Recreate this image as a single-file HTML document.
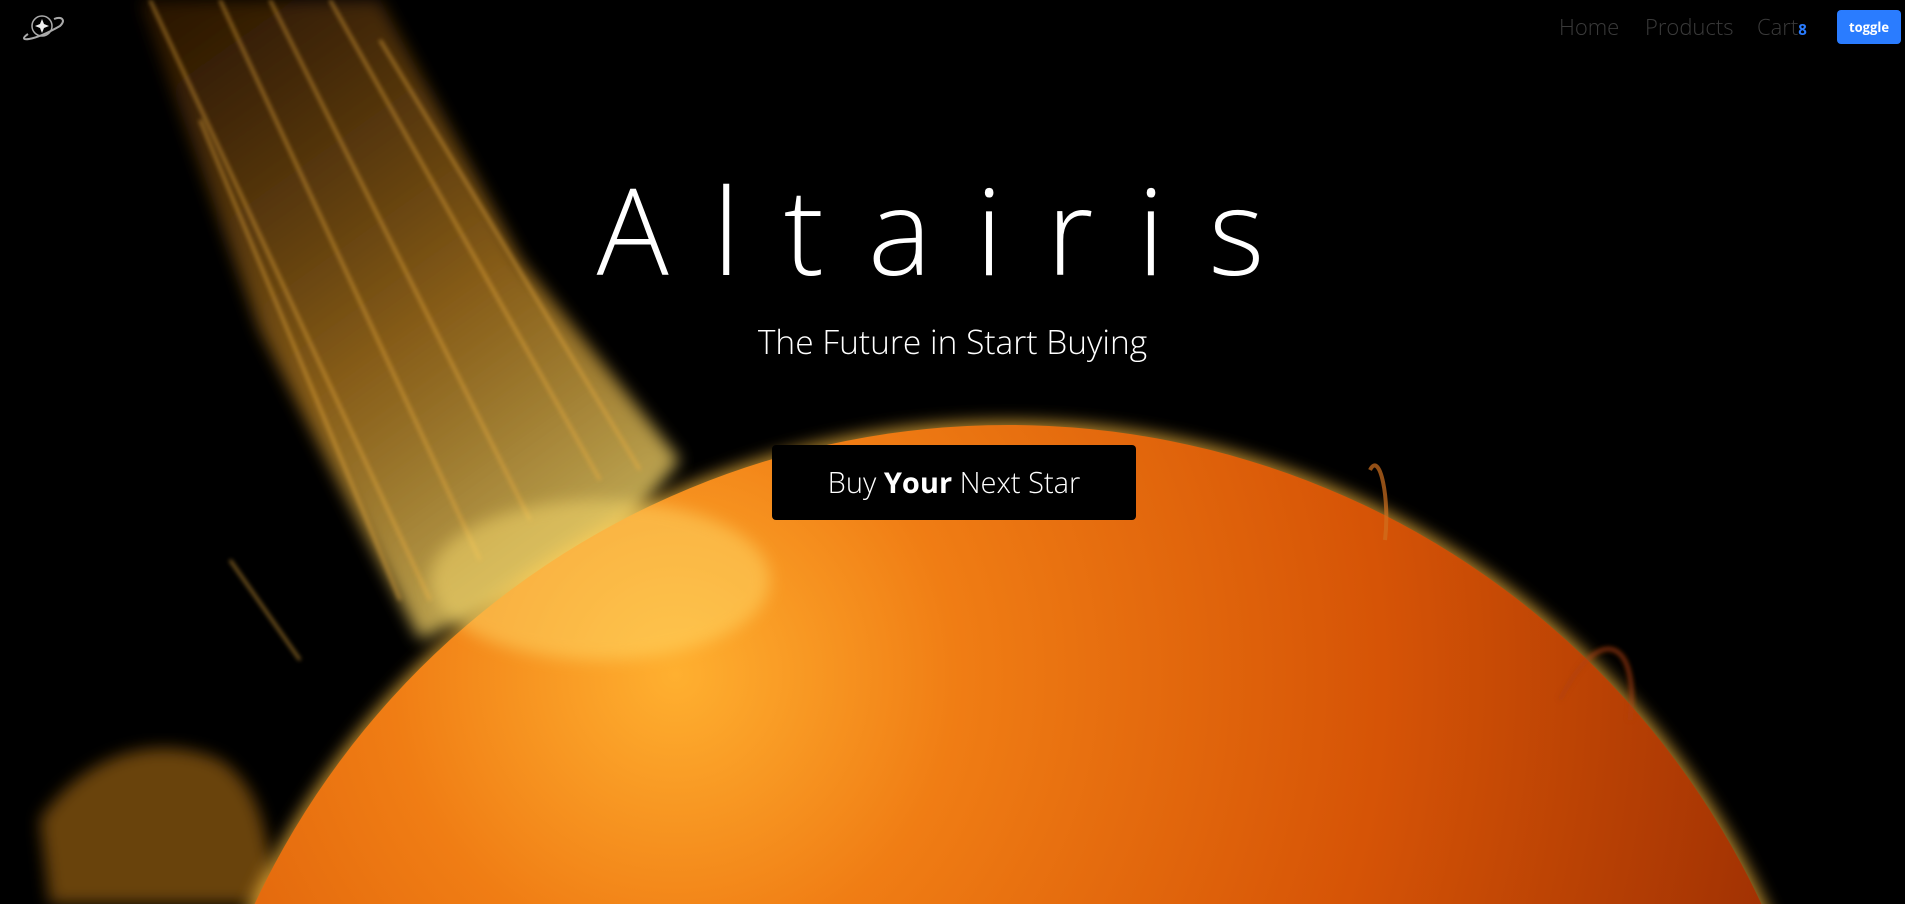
<!DOCTYPE html>
<html><head><meta charset="utf-8"><style>
html,body{margin:0;padding:0;background:#000;width:1905px;height:904px;overflow:hidden;font-family:"Open Sans","Liberation Sans",sans-serif;position:relative}
.bg{position:absolute;left:0;top:0}
nav a{position:absolute;top:12px;color:#3a3a3a;font-size:22px;font-weight:300;text-decoration:none;white-space:nowrap}
.tg{position:absolute;left:1837px;top:10px;width:64px;height:34px;background:#2a7cff;border-radius:4px;color:#fff;font-weight:bold;font-size:13px;line-height:34px;text-align:center}
h1{position:absolute;left:0;width:1905px;top:160px;margin:0;text-align:center;color:#fff;font-weight:300;font-size:120px;letter-spacing:44px;line-height:140px;white-space:nowrap;overflow:hidden}
.sub{position:absolute;left:0;width:1905px;top:318px;text-align:center;color:#fff;font-weight:300;font-size:33.5px}
.btn{position:absolute;left:772px;top:445px;width:364px;height:75px;background:#000;border-radius:4px;color:#fff;font-size:29px;line-height:75px;text-align:center;font-weight:300}
</style></head><body>
<svg class="bg" width="1905" height="904" viewBox="0 0 1905 904">
<defs>
<radialGradient id="sun" cx="0.3" cy="0.15" r="0.85">
<stop offset="0" stop-color="#ffb030"/><stop offset="0.2" stop-color="#f07d14"/><stop offset="0.5" stop-color="#d65406"/><stop offset="1" stop-color="#7a1800"/></radialGradient>
<linearGradient id="fl" x1="0" y1="0" x2="0.6" y2="1">
<stop offset="0" stop-color="#6a3504" stop-opacity="0.5"/><stop offset="0.6" stop-color="#e09a28" stop-opacity="0.8"/><stop offset="1" stop-color="#ffe070"/></linearGradient>
<filter id="b"><feGaussianBlur stdDeviation="8"/></filter>
<filter id="b2"><feGaussianBlur stdDeviation="2"/></filter>
</defs>
<polygon points="140,0 380,0 520,260 680,460 600,560 420,640 260,330" fill="url(#fl)" filter="url(#b)" opacity="0.75"/>
<g stroke="#f0b040" stroke-width="3" opacity="0.55" filter="url(#b2)" fill="none">
<path d="M150,0 L430,600"/><path d="M220,0 L480,560"/><path d="M270,0 L530,520"/><path d="M330,0 L600,480"/><path d="M380,40 L640,470"/><path d="M200,120 L400,600"/><path d="M230,560 L300,660"/>
</g>
<path d="M40,820 C80,760 150,730 220,760 C280,800 260,880 290,904 L50,904 Z" fill="#c07a18" opacity="0.55" filter="url(#b)"/>
<circle cx="1008" cy="1257" r="836" fill="#ffc040" filter="url(#b)" opacity="0.7"/>
<circle cx="1008" cy="1257" r="832" fill="url(#sun)"/>
<ellipse cx="600" cy="580" rx="170" ry="80" fill="#ffe070" opacity="0.45" filter="url(#b)"/>
<path d="M1370,470 C1380,450 1390,500 1385,540" stroke="#d07020" stroke-width="4" fill="none" opacity="0.7"/>
<path d="M1560,700 C1600,620 1640,640 1630,720" stroke="#b04010" stroke-width="5" fill="none" opacity="0.6" filter="url(#b2)"/>
<g transform="translate(22,12)" fill="none" stroke="#aaa">
<circle cx="20" cy="14" r="10" stroke-width="1.5"/>
<path d="M6,22 C-6,30 10,30 38,14 C44,8 40,4 32,7" stroke-width="2"/>
<path d="M20,7 L22,12 L27,14 L22,16 L20,21 L18,16 L13,14 L18,12 Z" fill="#eee" stroke="none"/>
</g>
</svg>
<nav>
<a style="left:1559px">Home</a>
<a style="left:1645px">Products</a>
<a style="left:1757px">Cart<b style="color:#2a7cff;font-size:15px;font-weight:700">8</b></a>
</nav>
<div class="tg">toggle</div>
<h1>Altairis</h1>
<div class="sub">The Future in Start Buying</div>
<div class="btn">Buy <b style="font-weight:700">Your</b> Next Star</div>
</body></html>
